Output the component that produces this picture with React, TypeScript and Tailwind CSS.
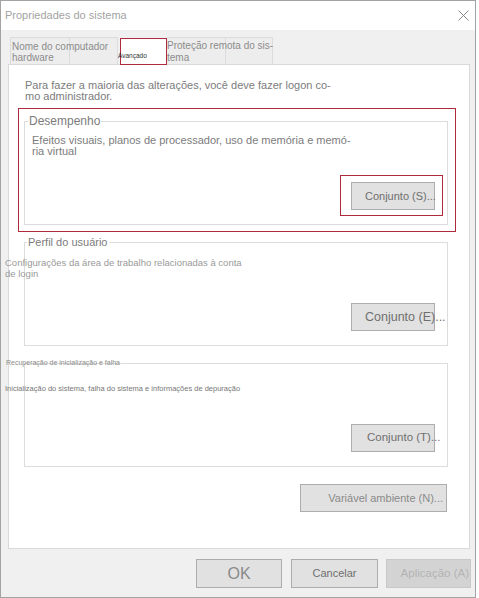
import React from "react";

const sans = "font-['Liberation_Sans',Arial,sans-serif]";

const GroupBox = ({
  title,
  titleClass,
  children,
  className,
}: {
  title: string;
  titleClass: string;
  children: React.ReactNode;
  className?: string;
}) => (
  <div
    className={`relative w-[424px] h-[104px] border border-[#dcdcdc] flex flex-col ${className ?? ""}`}
  >
    {/* title sits on the top border */}
    <span className={`absolute px-[1px] whitespace-nowrap ${titleClass}`}>{title}</span>
    {children}
  </div>
);

const Btn = ({ label, className }: { label: string; className?: string }) => (
  <div
    className={`w-[84px] h-[28px] bg-[#e1e1e1] border border-[#adadad] flex items-center whitespace-nowrap text-[#6f6f6f] ${className ?? ""}`}
  >
    {label}
  </div>
);

const App = () => {
  return (
    <div className={`w-[479px] h-[598px] bg-white ${sans}`}>
      {/* window */}
      <div className="w-[476px] h-[598px] border border-[#a3a3a3] bg-[#f0f0f0] flex flex-col">
        {/* title bar */}
        <div className="h-[29px] bg-white flex items-center justify-between pl-[4px] pr-[6px]">
          <span className="text-[11px] text-[#a3a3a3]">Propriedades do sistema</span>
          <svg width="11" height="11" viewBox="0 0 11 11">
            <path d="M0.5 0.5 L10.5 10.5 M10.5 0.5 L0.5 10.5" stroke="#8a8a8a" strokeWidth="1" />
          </svg>
        </div>

        {/* body */}
        <div className="flex-1 flex flex-col px-[7px]">
          {/* tabs */}
          <div className="mt-[7px] h-[27px] flex items-end">
            <div className="relative ml-[2px] w-[108px] h-[27px] flex bg-[#ededed] border border-b-0 border-[#dcdcdc]">
              <div className="w-[59px] border-r border-[#dcdcdc]" />
              <span className="absolute left-[1px] top-[3px] text-[10px] leading-[11px] text-[#8c8c8c] whitespace-nowrap">
                Nome do computador
                <br />
                hardware
              </span>
            </div>
            <div className="ml-[2px] relative z-10 -mb-px w-[47px] h-[27px] bg-white border border-[#b02a3e]">
              <span className="block -ml-[3px] pt-[13px] text-[6.5px] leading-[7px] text-[#333] whitespace-nowrap">
                Avançado
              </span>
            </div>
            <div className="relative w-[106px] h-[27px] flex bg-[#ededed] border border-b-0 border-l-0 border-[#dcdcdc]">
              <div className="w-[59px] border-r border-[#dcdcdc]" />
              <span className="absolute left-0 top-[2px] text-[10px] leading-[12px] text-[#8c8c8c] whitespace-nowrap">
                Proteção remota do sis-
                <br />
                tema
              </span>
            </div>
          </div>

          {/* tab panel */}
          <div className="w-[462px] h-[485px] bg-white border border-[#d9d9d9] flex flex-col">
            <p className="ml-[16px] mt-[15px] text-[11px] leading-[11px] text-[#7c7c7c] whitespace-nowrap">
              Para fazer a maioria das alterações, você deve fazer logon co-
              <br />
              mo administrador.
            </p>

            {/* highlighted performance group */}
            <div className="ml-[9px] mt-[6px] w-[438px] h-[124px] border border-[#b02a3e] pl-[5px] pt-[12px]">
              <GroupBox
                title="Desempenho"
                titleClass="-top-[8px] left-[3px] bg-white text-[12px] leading-[14px] text-[#7c7c7c]"
              >
                <p className="pl-[7px] pt-[13px] text-[11px] leading-[11px] text-[#7c7c7c] whitespace-nowrap">
                  Efeitos visuais, planos de processador, uso de memória e memó-
                  <br />
                  ria virtual
                </p>
                <div className="mt-auto flex justify-end pr-[4px] pb-[8px]">
                  <div className="border border-[#b02a3e] pl-[10px] pr-[7px] pt-[6px] pb-[5px]">
                    <Btn label="Conjunto (S)..." className="text-[11px] pl-[13px]" />
                  </div>
                </div>
              </GroupBox>
            </div>

            <GroupBox
              className="ml-[15px] mt-[10px]"
              title="Perfil do usuário"
              titleClass="-top-[8px] left-[2px] bg-white text-[11px] leading-[14px] text-[#7c7c7c]"
            >
              <p className="-ml-[20px] pt-[14px] text-[9.5px] leading-[11px] text-[#9a9a9a] whitespace-nowrap">
                Configurações da área de trabalho relacionadas à conta
                <br />
                de login
              </p>
              <div className="mt-auto flex justify-end pr-[12px] pb-[14px]">
                <Btn label="Conjunto (E)..." className="text-[12.5px] pl-[13px]" />
              </div>
            </GroupBox>

            <GroupBox
              className="ml-[15px] mt-[17px]"
              title="Recuperação de inicialização e falha"
              titleClass="-top-[6px] -left-[20px] text-[7px] leading-[10px] text-[#8a8a8a]"
            >
              <p className="-ml-[20px] pt-[20px] text-[7.5px] leading-[9px] text-[#777] whitespace-nowrap">
                Inicialização do sistema, falha do sistema e informações de depuração
              </p>
              <div className="mt-auto flex justify-end pr-[12px] pb-[14px]">
                <Btn label="Conjunto (T)..." className="text-[11.5px] pl-[15px]" />
              </div>
            </GroupBox>

            <div className="ml-[291px] mt-[17px] w-[147px] h-[28px] bg-[#e1e1e1] border border-[#adadad] flex items-center justify-end pr-[3px] text-[11px] text-[#8a8a8a] whitespace-nowrap">
              Variável ambiente (N)...
            </div>
          </div>

          {/* dialog buttons */}
          <div className="mt-[10px] flex justify-end -mr-[3px] gap-[9px]">
            <div className="w-[86px] h-[29px] bg-[#e1e1e1] border border-[#adadad] flex items-center justify-center text-[16px] text-[#8a8a8a]">
              OK
            </div>
            <div className="w-[87px] h-[29px] bg-[#e1e1e1] border border-[#adadad] flex items-center justify-center text-[11px] text-[#6f6f6f]">
              Cancelar
            </div>
            <div className="-ml-px w-[85px] h-[29px] bg-[#d3d3d3] border border-[#c8c8c8] flex items-center justify-end pr-[1px] text-[11.5px] text-[#b3b3b3] whitespace-nowrap">
              Aplicação (A)
            </div>
          </div>
        </div>
      </div>
    </div>
  );
};

export default App;
